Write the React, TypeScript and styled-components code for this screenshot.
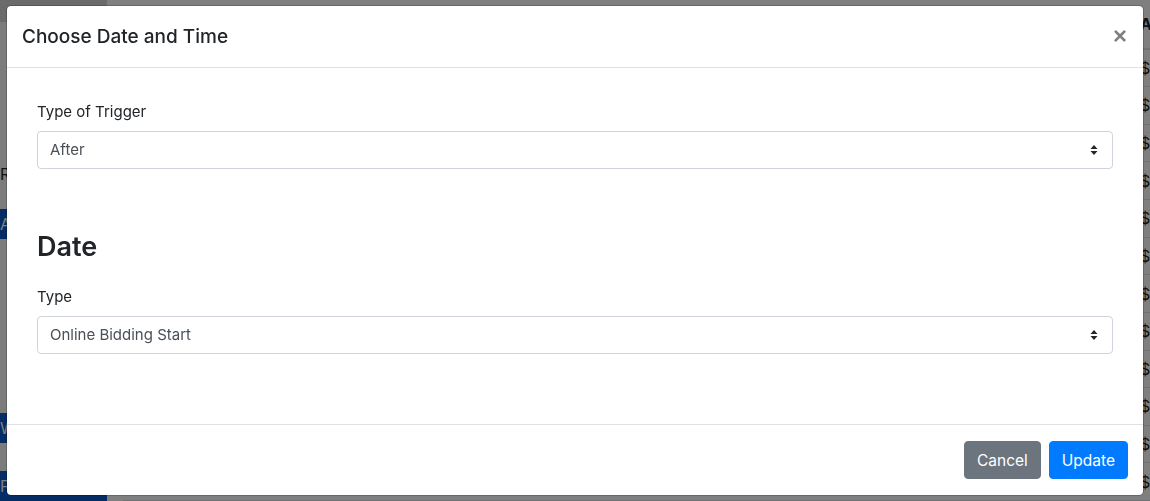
import React from 'react';
import styled, { createGlobalStyle } from 'styled-components';

const GlobalStyle = createGlobalStyle`
  html, body {
    margin: 0;
    padding: 0;
    overflow: hidden;
    background: #fff;
  }
  body {
    font-family: Inter, "Liberation Sans", Arial, sans-serif;
    font-size: 16px;
    line-height: 1.5;
    color: #212529;
  }
`;

/* ---------- page behind the modal ---------- */

const Page = styled.div`
  display: flex;
  width: 1150px;
  height: 501px;
  overflow: hidden;
`;

const Sidebar = styled.div`
  width: 107px;
  flex-shrink: 0;
  display: flex;
  flex-direction: column;
  background: #f8f9fa;
`;

const SideTop = styled.div`
  height: 36px;
  background: #d6d6d6;
`;

const SideText = styled.div`
  padding: 140px 0 0 0;
  height: 60px;
  font-size: 16px;
`;

const SideButton = styled.div<{ $top: number }>`
  margin-top: ${p => p.$top}px;
  height: 30px;
  background: #0a58ca;
  color: #fff;
  font-size: 16px;
  line-height: 30px;
`;

const Main = styled.div`
  flex: 1;
  padding-left: 16px;
  display: flex;
  flex-direction: column;
`;

const HeadRow = styled.div`
  display: grid;
  grid-template-columns: 67px 158px 212px 580px 200px;
  height: 48px;
  align-items: center;
  font-weight: 700;
  border-bottom: 2px solid #dee2e6;
`;

const Row = styled.div`
  display: grid;
  grid-template-columns: 67px 158px 212px 580px 200px;
  height: 37px;
  align-items: center;
  border-bottom: 1px solid #dee2e6;
  font-size: 16px;
`;

const Cell = styled.span`
  white-space: nowrap;
`;

/* ---------- modal ---------- */

const Backdrop = styled.div`
  position: fixed;
  inset: 0;
  background: rgba(0, 0, 0, 0.5);
`;

const ModalLayer = styled.div`
  position: fixed;
  inset: 0;
  padding: 5px 0 0 6px;
`;

const Dialog = styled.div`
  width: 1138px;
  background: #fff;
  border: 1px solid rgba(0, 0, 0, 0.2);
  border-radius: 5px;
  box-sizing: border-box;
  display: flex;
  flex-direction: column;
  background-clip: padding-box;
`;

const Header = styled.div`
  display: flex;
  align-items: flex-start;
  justify-content: space-between;
  padding: 16px 16px 15px 15px;
  border-bottom: 1px solid #dee2e6;
`;

const Title = styled.h5`
  margin: 0;
  font-size: 19px;
  font-weight: 500;
  line-height: 30px;
  color: #212529;
`;

const Close = styled.button`
  border: 0;
  background: transparent;
  padding: 0;
  margin: -1px 0 0 0;
  font-family: "Liberation Sans", Arial, sans-serif;
  font-size: 24px;
  font-weight: 700;
  line-height: 30px;
  color: #000;
  opacity: 0.5;
  cursor: pointer;
  height: 30px;
`;

const Body = styled.div`
  padding: 32px 30px 70px 30px;
  display: flex;
  flex-direction: column;
`;

const FormGroup = styled.div`
  display: flex;
  flex-direction: column;
`;

const Label = styled.label`
  font-size: 15px;
  line-height: 24px;
  margin-bottom: 7px;
`;

const SelectBox = styled.div`
  height: 38px;
  box-sizing: border-box;
  border: 1px solid #ced4da;
  border-radius: 4px;
  display: flex;
  align-items: center;
  justify-content: space-between;
  padding: 0 14px 0 12px;
  color: #495057;
  font-size: 15px;
  background: #fff;
`;

const SectionHeading = styled.h3`
  margin: 62px 0 22px 0;
  font-size: 27px;
  font-weight: 600;
  line-height: 1.2;
  color: #212529;
`;

const Footer = styled.div`
  display: flex;
  justify-content: flex-end;
  align-items: center;
  gap: 8px;
  padding: 16px 15px 16px 16px;
  border-top: 1px solid #dee2e6;
`;

const Button = styled.button<{ $variant: 'secondary' | 'primary' }>`
  height: 38px;
  padding: 0 12px;
  border-radius: 4px;
  border: 1px solid ${p => (p.$variant === 'primary' ? '#007bff' : '#6c757d')};
  background: ${p => (p.$variant === 'primary' ? '#007bff' : '#6c757d')};
  color: #fff;
  font-family: Inter, "Liberation Sans", Arial, sans-serif;
  font-size: 15.5px;
  line-height: 1.5;
  cursor: pointer;
`;

const Caret = () => (
  <svg width="8" height="12" viewBox="0 0 8 12">
    <path d="M4 1 L7.5 5 H0.5 Z" fill="#212529" />
    <path d="M4 11 L7.5 7 H0.5 Z" fill="#212529" />
  </svg>
);

const Select: React.FC<{ value: string }> = ({ value }) => (
  <SelectBox>
    <span>{value}</span>
    <Caret />
  </SelectBox>
);

const rows = [
  ['', '2 weeks ago', 'Jane Smith', 'Dinner for two', '$1'],
  ['', '3 weeks ago', 'Tom Baker', 'Signed print', '$1'],
  ['', '3 weeks ago', 'Ann Lee', 'Weekend stay', '$1'],
  ['', '3 weeks ago', 'Mark Cole', 'Wine tasting', '$1'],
  ['', '4 weeks ago', 'Sara Hill', 'Gift basket', '$1'],
  ['', '4 weeks ago', 'Paul Green', 'Golf lesson', '$1'],
  ['', 'a month ago', 'Kate Moss', 'Cooking class', '$6'],
  ['', 'a month ago', 'Lily Ward', 'Theatre tickets', '$1'],
  ['', 'a month ago', 'Ian Ross', 'Spa day', '$1'],
  ['', 'a month ago', 'Nina Park', 'Art book', '$1'],
  ['', 'a month ago', 'Eve Stone', 'Museum pass', '$1'],
  ['', 'a month ago', 'Richard Jones', 'Family pass to the gallery', '$1'],
];

export default function App() {
  return (
    <>
      <GlobalStyle />
      <Page>
        <Sidebar>
          <SideTop />
          <SideText>Rules</SideText>
          <SideButton $top={10}>Add ▾</SideButton>
          <SideButton $top={174}>Workout</SideButton>
          <SideButton $top={28}>Publish</SideButton>
        </Sidebar>
        <Main>
          <HeadRow>
            <Cell />
            <Cell>Date</Cell>
            <Cell>Bidder</Cell>
            <Cell>Item</Cell>
            <Cell>Amount</Cell>
          </HeadRow>
          {rows.map((r, i) => (
            <Row key={i}>
              {r.map((c, j) => (
                <Cell key={j}>{c}</Cell>
              ))}
            </Row>
          ))}
        </Main>
      </Page>
      <Backdrop />
      <ModalLayer>
        <Dialog role="dialog">
          <Header>
            <Title>Choose Date and Time</Title>
            <Close aria-label="Close">×</Close>
          </Header>
          <Body>
            <FormGroup>
              <Label>Type of Trigger</Label>
              <Select value="After" />
            </FormGroup>
            <SectionHeading>Date</SectionHeading>
            <FormGroup>
              <Label>Type</Label>
              <Select value="Online Bidding Start" />
            </FormGroup>
          </Body>
          <Footer>
            <Button $variant="secondary">Cancel</Button>
            <Button $variant="primary">Update</Button>
          </Footer>
        </Dialog>
      </ModalLayer>
    </>
  );
}
